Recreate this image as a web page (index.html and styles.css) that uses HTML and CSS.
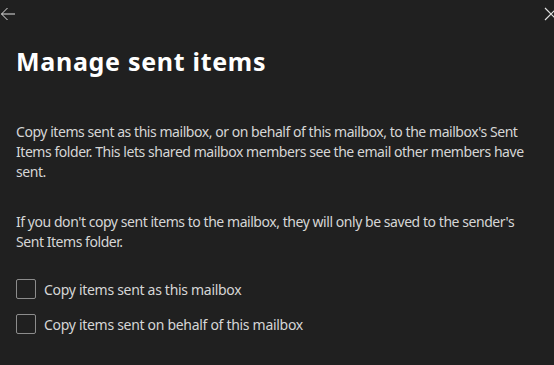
FILE: index.html
```html
<!DOCTYPE html>
<html lang="en">
<head>
<meta charset="utf-8">
<title>Manage sent items</title>
<link rel="stylesheet" href="styles.css">
</head>
<body>
<div class="panel">
  <div class="topbar">
    <button class="icon-btn back" aria-label="Back">
      <svg width="16" height="14" viewBox="0 0 16 14"><path d="M15 7H1.5M7.5 1L1.5 7l6 6" fill="none" stroke="#e0e0e0" stroke-width="1"/></svg>
    </button>
    <button class="icon-btn close" aria-label="Close">
      <svg width="14" height="14" viewBox="0 0 14 14"><path d="M1 1l12 12M13 1L1 13" fill="none" stroke="#e0e0e0" stroke-width="1.2"/></svg>
    </button>
  </div>
  <h1 class="title">Manage sent items</h1>
  <p class="text">Copy items sent as this mailbox, or on behalf of this mailbox, to the mailbox's Sent Items folder. This lets shared mailbox members see the email other members have sent.</p>
  <p class="text second">If you don't copy sent items to the mailbox, they will only be saved to the sender's Sent Items folder.</p>
  <div class="options">
    <label class="option"><span class="box"></span><span class="label">Copy items sent as this mailbox</span></label>
    <label class="option"><span class="box"></span><span class="label">Copy items sent on behalf of this mailbox</span></label>
  </div>
</div>
</body>
</html>
```

FILE: styles.css
```css
html, body {
  margin: 0;
  padding: 0;
  background: #202020;
  overflow: hidden;
}
body {
  font-family: "Noto Sans", "Open Sans", sans-serif;
  color: #d6d6d6;
  width: 554px;
  height: 365px;
}
.panel {
  display: flex;
  flex-direction: column;
  padding: 0 16px;
}
.topbar {
  display: flex;
  justify-content: space-between;
  align-items: center;
  height: 28px;
  margin: 0 -16px;
}
.icon-btn {
  background: none;
  border: 0;
  padding: 0;
  display: flex;
  align-items: center;
}
.close {
  margin-right: -4px;
}
.title {
  margin: 17px 0 0;
  font-size: 25px;
  font-weight: 700;
  line-height: 32px;
  letter-spacing: 0.7px;
  color: #ffffff;
}
.text {
  margin: 45px 0 0;
  font-size: 14px;
  line-height: 20px;
  letter-spacing: -0.45px;
}
.text.second {
  margin-top: 30px;
}
.options {
  display: flex;
  flex-direction: column;
  gap: 15px;
  margin-top: 27px;
}
.option {
  display: flex;
  align-items: center;
  gap: 8px;
  font-size: 14px;
  letter-spacing: -0.3px;
}
.box {
  width: 18px;
  height: 18px;
  border: 1px solid #8c8c8c;
  border-radius: 2px;
}
```
